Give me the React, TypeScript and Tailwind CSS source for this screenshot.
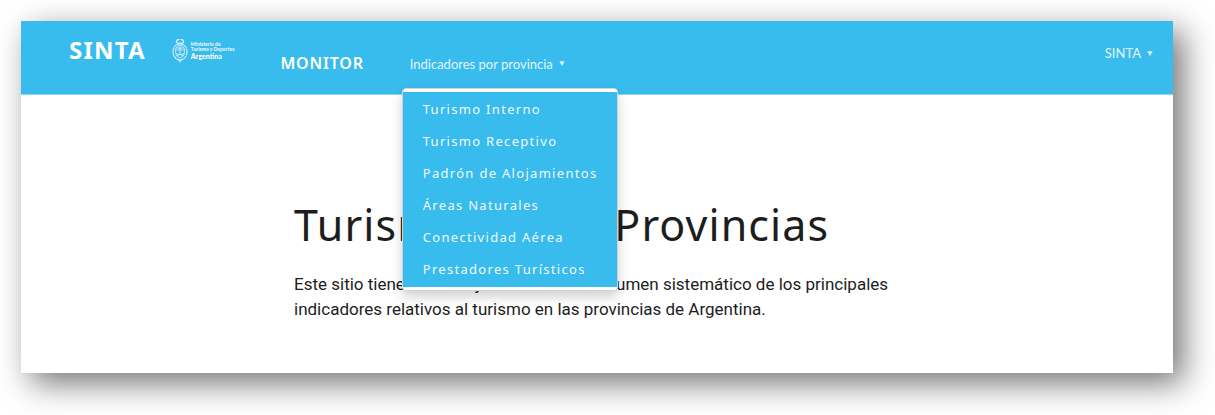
import type { ReactNode } from "react";

const provinceLinks = [
  "Turismo Interno",
  "Turismo Receptivo",
  "Padrón de Alojamientos",
  "Áreas Naturales",
  "Conectividad Aérea",
  "Prestadores Turísticos",
];

function Caret() {
  return (
    <svg viewBox="0 0 6 5" className="h-[5px] w-[6px] fill-current" aria-hidden="true">
      <path d="M0.3 0.2h5.4L3 5z" />
    </svg>
  );
}

function NavToggle({ children, expanded }: { children: ReactNode; expanded: boolean }) {
  return (
    <button
      type="button"
      aria-haspopup="true"
      aria-expanded={expanded}
      className="flex items-center gap-1.5 font-['Lato',sans-serif] text-[13px] leading-5 text-[#e2f5fd]"
    >
      {children}
      <Caret />
    </button>
  );
}

function Crest() {
  return (
    <svg viewBox="0 0 16 24" className="h-6 w-4" fill="none" stroke="#d8f1fc" aria-hidden="true">
      <path d="M4.6 4.2a3.5 3.5 0 1 1 6.8 0" strokeWidth="1.4" />
      <path d="M5 4.4h6" strokeWidth="1.6" />
      <ellipse cx="8" cy="12.8" rx="7" ry="8" strokeWidth="1.3" strokeDasharray="1.6 0.4" />
      <ellipse cx="8" cy="12.4" rx="4.7" ry="6.2" strokeWidth="0.8" />
      <path d="M3.6 10.5a4.7 6.2 0 0 1 8.8 0v1.7H3.6z" fill="#d8f1fc" fillOpacity="0.35" stroke="none" />
      <path d="M8 8.2v7.6M6.4 9.2h3.2M4 14.5l4 1.3 4-1.3M4.8 16.6 8 15.4l3.2 1.2" strokeWidth="0.9" />
      <path d="M5.4 20.4 8 22l2.6-1.6M8 20.6v3" strokeWidth="1.1" />
    </svg>
  );
}

function Dropdown() {
  return (
    <div className="absolute -left-2 top-full z-10 mt-3.5 rounded border border-[#c9d3d8] bg-white py-[3px] shadow-[0_6px_12px_rgba(0,0,0,0.18)]">
      <ul className="flex flex-col gap-px bg-[#38bbed] pb-0.5 pt-0.5">
        {provinceLinks.map((label) => (
          <li key={label}>
            <a
              href="#"
              className="block whitespace-nowrap px-5 text-[13px] leading-[31px] tracking-widest text-[#f0faff]"
            >
              {label}
            </a>
          </li>
        ))}
      </ul>
    </div>
  );
}

export default function App() {
  return (
    <div className="bg-white pb-[42px] pl-[21px] pr-[42px] pt-[21px] font-['Noto_Sans',sans-serif]">
      <div className="bg-white shadow-[10px_10px_30px_rgba(0,0,0,0.55)]">
        <header className="flex items-start border-b border-[#8ed9f6] bg-[#38bbed] pb-4 pl-12 pr-5 pt-4">
          <a href="#" className="pt-px text-2xl font-bold leading-6 tracking-wider text-white">
            SINTA
          </a>
          <a href="#" className="ml-[26px] flex items-center gap-[3px] pt-0.5 text-[#e4f6fd]">
            <Crest />
            <span className="flex flex-col whitespace-nowrap font-['Lato',sans-serif] text-[5px] font-black leading-[5px]">
              <span>Ministerio de</span>
              <span>Turismo y Deportes</span>
              <span className="text-[7px] leading-[8px] text-white">Argentina</span>
            </span>
          </a>
          <nav className="ml-[46px] flex items-center pt-3">
            <a href="#" className="text-base font-semibold leading-[29px] tracking-wider text-white">
              MONITOR
            </a>
            <div className="relative ml-[46px]">
              <NavToggle expanded>Indicadores por provincia</NavToggle>
              <Dropdown />
            </div>
          </nav>
          <div className="ml-auto pt-1.5">
            <NavToggle expanded={false}>SINTA</NavToggle>
          </div>
        </header>
        <main className="mx-auto max-w-[606px] pb-[51px] pt-[100px] text-[#1d1d1d]">
          <h1 className="whitespace-nowrap text-[43px] leading-[60px] tracking-wide">
            Turismo en las Provincias
          </h1>
          <p className="mt-[17px] font-['Roboto',sans-serif] text-[17px] leading-[25px]">
            Este sitio tiene como objetivo armar un resumen sistemático de los principales
            indicadores relativos al turismo en las provincias de Argentina.
          </p>
        </main>
      </div>
    </div>
  );
}
